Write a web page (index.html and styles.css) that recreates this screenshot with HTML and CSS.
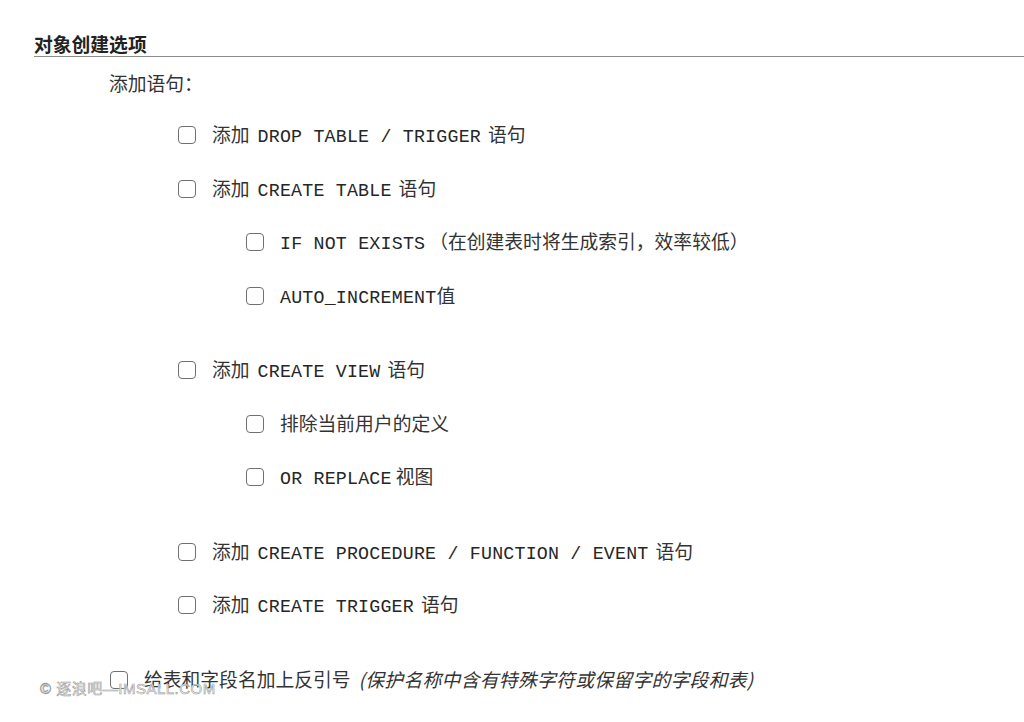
FILE: index.html
```html
<!DOCTYPE html>
<html lang="zh-CN">
<head>
    <meta charset="UTF-8">
    <meta name="viewport" content="width=device-width, initial-scale=1.0">
    <title>对象创建选项</title>
    <link rel="stylesheet" href="styles.css">
</head>
<body>
    <div class="section">
        <h2 class="section-title">对象创建选项</h2>

        <div class="group-label">添加语句：</div>

        <!-- DROP / CREATE TABLE -->
        <div class="group">
            <label class="option level-1">
                <span class="box"></span>
                <span class="text">添加<code>DROP TABLE / TRIGGER</code>语句</span>
            </label>
            <label class="option level-1">
                <span class="box"></span>
                <span class="text">添加<code>CREATE TABLE</code>语句</span>
            </label>
            <label class="option level-2">
                <span class="box"></span>
                <span class="text"><code class="lead">IF NOT EXISTS</code>（在创建表时将生成索引，效率较低）</span>
            </label>
            <label class="option level-2">
                <span class="box"></span>
                <span class="text"><code class="lead tight">AUTO_INCREMENT</code>值</span>
            </label>
        </div>

        <!-- CREATE VIEW -->
        <div class="group">
            <label class="option level-1">
                <span class="box"></span>
                <span class="text">添加<code>CREATE VIEW</code>语句</span>
            </label>
            <label class="option level-2">
                <span class="box"></span>
                <span class="text">排除当前用户的定义</span>
            </label>
            <label class="option level-2">
                <span class="box"></span>
                <span class="text"><code class="lead">OR REPLACE</code>视图</span>
            </label>
        </div>

        <!-- routines and triggers -->
        <div class="group">
            <label class="option level-1">
                <span class="box"></span>
                <span class="text">添加<code>CREATE PROCEDURE / FUNCTION / EVENT</code>语句</span>
            </label>
            <label class="option level-1">
                <span class="box"></span>
                <span class="text">添加<code>CREATE TRIGGER</code>语句</span>
            </label>
        </div>

        <label class="option level-0">
            <span class="box"></span>
            <span class="text">给表和字段名加上反引号<em>(保护名称中含有特殊字符或保留字的字段和表)</em></span>
        </label>
    </div>

    <div class="watermark">© 逐浪吧—IMSALL.COM</div>
</body>
</html>
```

FILE: styles.css
```css
* {
    margin: 0;
    padding: 0;
    box-sizing: border-box;
}
body {
    background: #fff;
    color: #333;
    font-family: "Noto Sans CJK SC", "Liberation Sans", sans-serif;
    font-size: 18.8px;
    overflow: hidden;
}
.section {
    padding: 31px 0 0 34px;
}
.section-title {
    font-size: 18.8px;
    font-weight: bold;
    line-height: 25px;
    color: #222;
    border-bottom: 1px solid #8c8c8c;
}
.group-label {
    padding-left: 75px;
    height: 51px;
    line-height: 51px;
}
.group {
    margin-bottom: 21px;
}
.option {
    display: flex;
    align-items: center;
    gap: 16px;
    height: 53.5px;
    cursor: pointer;
}
.option .text {
    padding-bottom: 2px;
}
.level-0 {
    padding-left: 76px;
}
.level-1 {
    padding-left: 144px;
}
.level-2 {
    padding-left: 212px;
}
.box {
    width: 18px;
    height: 18px;
    border: 1.5px solid #707070;
    border-radius: 4px;
    background: #fff;
    flex-shrink: 0;
    margin-top: 1px;
}
code {
    font-family: "Liberation Mono", monospace;
    font-size: 18.3px;
    letter-spacing: 0.2px;
    color: #262626;
    margin: 0 7px 0 8px;
}
code.lead {
    margin-left: 0;
    margin-right: 4px;
}
code.tight {
    margin-right: 0;
}
em {
    font-style: italic;
    letter-spacing: 0.3px;
    margin-left: 8px;
}
.watermark {
    position: absolute;
    left: 40px;
    top: 677px;
    font-family: "Liberation Sans", "Noto Sans CJK SC", sans-serif;
    font-size: 15px;
    color: #fff;
    -webkit-text-stroke: 0.6px #9a9a9a;
    letter-spacing: 0.5px;
}
```
